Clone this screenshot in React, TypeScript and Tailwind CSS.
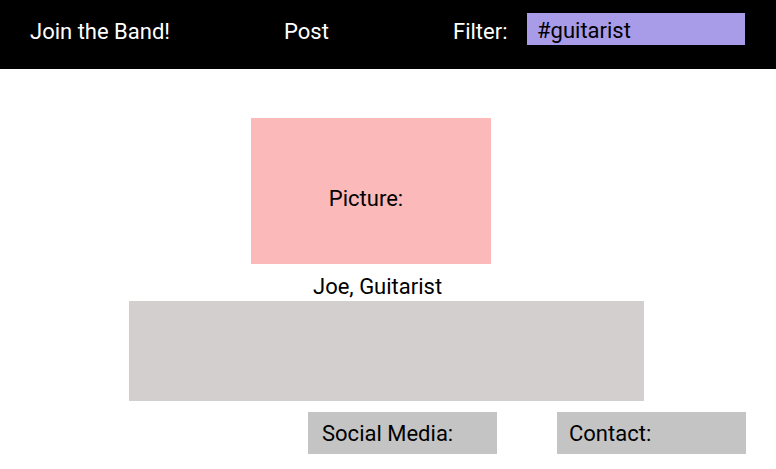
import React from "react";

export default function App() {
  return (
    <div className="w-[776px] h-[469px] bg-white font-['Roboto',sans-serif] text-[22px] text-black overflow-hidden">
      {/* top bar */}
      <header className="h-[69px] bg-black text-white flex items-start pt-[13px]">
        <div className="w-[284px] pl-[30px] leading-[38px]">Join the Band!</div>
        <div className="w-[169px] leading-[38px]">Post</div>
        <div className="w-[74px] leading-[38px]">Filter:</div>
        <div className="w-[218px] h-[32px] bg-[#a89be8] text-black pl-[10px] leading-[36px]">#guitarist</div>
      </header>

      <main className="flex flex-col items-start">
        <div className="mt-[49px] ml-[251px] w-[240px] h-[146px] bg-[#fbb9b9] flex items-center justify-center pr-[10px] pt-[15px]">
          Picture:
        </div>
        <div className="ml-[313px] h-[37px] flex items-center pt-[7px]">Joe, Guitarist</div>
        <div className="ml-[129px] w-[515px] h-[100px] bg-[#d4cfcf]" />
        <div className="mt-[11px] flex">
          <div className="ml-[308px] w-[189px] h-[42px] bg-[#c4c4c4] pl-[14px] flex items-center">Social Media:</div>
          <div className="ml-[60px] w-[189px] h-[42px] bg-[#c4c4c4] pl-[12px] flex items-center">Contact:</div>
        </div>
      </main>
    </div>
  );
}
